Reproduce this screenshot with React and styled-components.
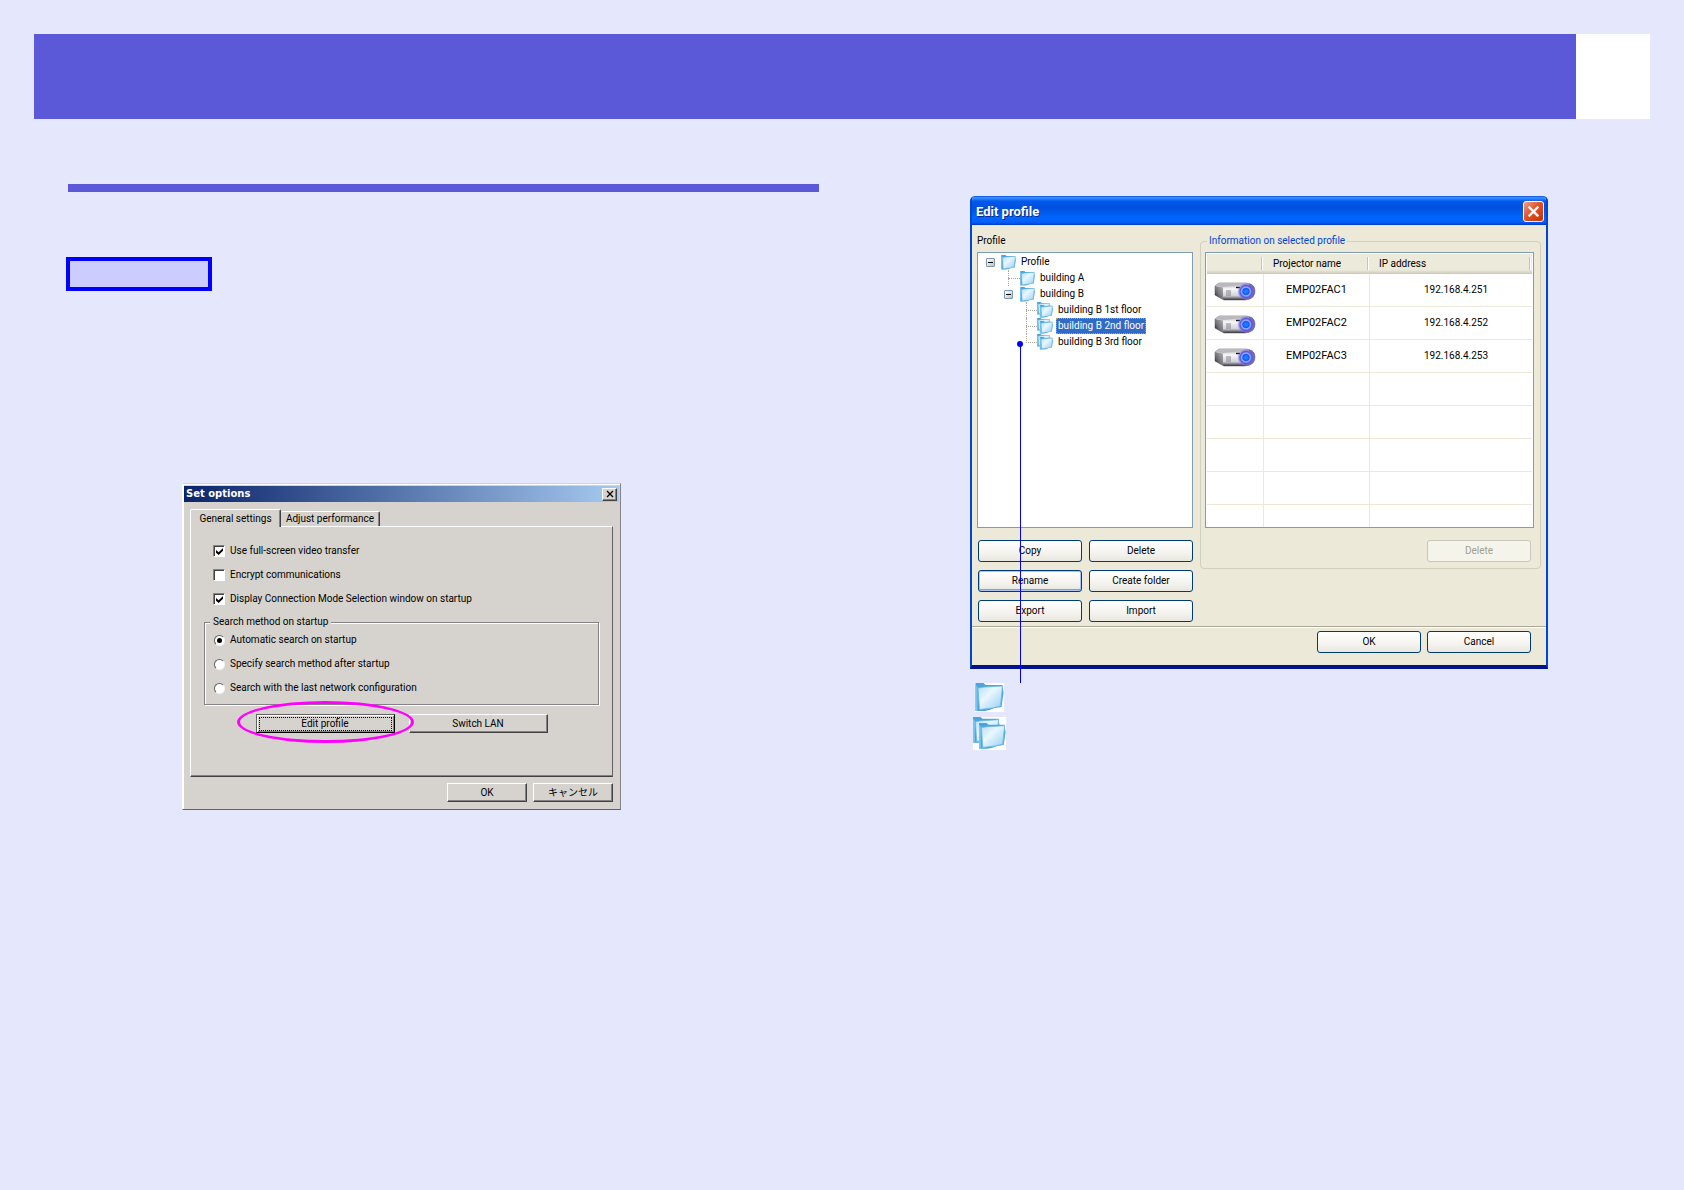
import React from "react";
import styled, { createGlobalStyle, css } from "styled-components";

const uiFont = 'Roboto, "Liberation Sans", "Noto Sans CJK JP", sans-serif';

const GlobalStyle = createGlobalStyle`
  *, *::before, *::after { box-sizing: border-box; }
  body { margin: 0; background: #e5e8fc; font-family: ${uiFont}; color: #000; }
  button, input { font: inherit; color: inherit; margin: 0; }
`;

/* ---------- page ---------- */

const Page = styled.div`
  min-height: 100vh;
  padding: 34px;
`;

const Banner = styled.header`
  display: flex;
  height: 85px;
  background: #5b59d8;
`;

const PageNumber = styled.div`
  width: 74px;
  margin-left: auto;
  background: #fff;
`;

const Columns = styled.main`
  display: grid;
  grid-template-columns: minmax(0, 1fr) minmax(0, 1fr);
  gap: 46px;
  padding: 65px 34px 0;
`;

const Column = styled.section`
  display: flex;
  flex-direction: column;
  align-items: flex-start;
`;

const SectionRule = styled.div`
  align-self: stretch;
  height: 8px;
  background: #5b59d8;
`;

const Tag = styled.div`
  width: 142px;
  height: 30px;
  margin-top: 67px;
  background: #ccf;
  border: 2px solid #00f;
  outline: 2px solid #00f;
`;

const Figure = styled.figure`
  position: relative;
  margin: ${(p) => p.$top}px 0 0 ${(p) => p.$left}px;
`;

const Highlight = styled.div`
  position: absolute;
  left: 55px;
  top: 218px;
  width: 177px;
  height: 42px;
  border: 3px solid #f0f;
  border-radius: 50%;
  pointer-events: none;
`;

const Callout = styled.div`
  position: absolute;
  left: 50px;
  top: 148px;
  width: 1px;
  height: 339px;
  background: #00f;
  pointer-events: none;

  &::before {
    content: "";
    position: absolute;
    left: -3px;
    top: -3px;
    width: 6px;
    height: 6px;
    border-radius: 50%;
    background: #00f;
  }
`;

const IconKey = styled.div`
  display: flex;
  flex-direction: column;
  align-items: center;
  gap: 5px;
  width: 33px;
  margin: 14px 0 0 3px;
`;

const IconTile = styled.div`
  display: flex;
  background: #fff;
`;

/* ---------- classic window ---------- */

const ClassicWindow = styled.div`
  width: 439px;
  padding: 2px 1px 1px;
  background: #d6d3ce;
  border: 1px solid;
  border-color: #d6d3ce #848284 #636163 #fff;
  box-shadow: inset 1px 1px 0 #fff;
  font-size: 10px;
  line-height: 12px;
`;

const ClassicTitle = styled.div`
  display: flex;
  align-items: center;
  justify-content: space-between;
  height: 16px;
  padding: 0 2px;
  background: linear-gradient(90deg, #0a246a, #a6caf0);
  color: #fff;
  font-family: "DejaVu Sans", sans-serif;
  font-size: 10px;
  font-weight: 700;
`;

const raised = css`
  background: #d6d3ce;
  border: 1px solid;
  border-color: #fff #424142 #424142 #fff;
  box-shadow: inset -1px -1px 0 #848284;
`;

const ClassicClose = styled.button`
  ${raised}
  display: flex;
  align-items: center;
  justify-content: center;
  width: 15px;
  height: 13px;
  padding: 0;
`;

const ClassicBody = styled.div`
  padding: 7px 6px 6px;
`;

const Tabs = styled.div`
  display: flex;
  align-items: flex-end;
`;

const Tab = styled.button`
  position: relative;
  height: ${(p) => (p.$active ? 18 : 15)}px;
  width: ${(p) => (p.$active ? 91 : 99)}px;
  margin-bottom: ${(p) => (p.$active ? -1 : 0)}px;
  z-index: ${(p) => (p.$active ? 1 : 0)};
  padding: 0;
  background: #d6d3ce;
  border: 1px solid #fff;
  border-width: 1px 1px 0 ${(p) => (p.$active ? 1 : 0)}px;
  border-right-color: #424142;
  border-radius: 2px 2px 0 0;
  box-shadow: inset -1px 0 0 #848284;
  white-space: nowrap;
`;

const TabPanel = styled.div`
  padding: 12px 13px 43px;
  border: 1px solid;
  border-color: #fff #636163 #424142 #fff;
  box-shadow: inset 0 -1px 0 #848284;
`;

const Choice = styled.label`
  display: flex;
  align-items: center;
  gap: 5px;
  height: 24px;
  padding-left: 9px;
`;

const CheckInput = styled.input.attrs({ type: "checkbox" })`
  appearance: none;
  width: 12px;
  height: 12px;
  background: #fff;
  border: 1px solid;
  border-color: #848284 #fff #fff #848284;
  box-shadow: inset 1px 1px 0 #424142;

  &:checked::before {
    content: "";
    display: block;
    width: 7px;
    height: 7px;
    margin: 2px;
    background: #000;
    clip-path: polygon(0 30%, 38% 62%, 100% 0, 100% 40%, 38% 100%, 0 68%);
  }
`;

const RadioInput = styled.input.attrs({ type: "radio" })`
  appearance: none;
  width: 11px;
  height: 11px;
  background: #fff;
  border: 1px solid;
  border-color: #636163 #f4f3ee #f4f3ee #636163;
  border-radius: 50%;

  &:checked::before {
    content: "";
    display: block;
    width: 5px;
    height: 5px;
    margin: 2px;
    border-radius: 50%;
    background: #000;
  }
`;

const ClassicGroup = styled.fieldset`
  min-width: 0;
  margin: 5px 0 0;
  padding: 0 0 4px;
  border: 1px solid #848284;
  box-shadow: 1px 1px 0 #fff, inset 1px 1px 0 #fff;

  legend {
    margin-left: 5px;
    padding: 0 3px;
    background: #d6d3ce;
  }
`;

const ClassicActions = styled.div`
  display: flex;
  gap: ${(p) => p.$gap}px;
  justify-content: ${(p) => p.$align};
  margin-top: ${(p) => p.$top}px;
`;

const ClassicButton = styled.button`
  ${raised}
  width: ${(p) => p.$width}px;
  height: 19px;
  padding: 0;
  ${(p) =>
    p.$focused &&
    css`
      border-color: #636163 #000 #000 #636163;
      box-shadow: inset 1px 1px 0 #fff, inset -1px -1px 0 #848284;
      span {
        display: block;
        margin: 0 2px;
        border: 1px dotted #000;
      }
    `}
`;

/* ---------- XP window ---------- */

const XpWindow = styled.div`
  width: 578px;
  background: #ece9d8;
  border: 2px solid #0046d5;
  border-top: 0;
  border-bottom: 4px solid #00138c;
  border-radius: 5px 5px 0 0;
  overflow: hidden;
  font-size: 10px;
  line-height: 14px;
`;

const XpTitle = styled.div`
  display: flex;
  align-items: center;
  justify-content: space-between;
  height: 29px;
  margin: 0 -2px;
  padding: 2px 4px 0 6px;
  background: linear-gradient(#0a50d8, #3a93ff 6%, #0058ee 18%, #0050dc 40%, #0066ff 75%, #0060fc 90%, #0038c0);
  color: #fff;
  font-size: 13px;
  font-weight: 700;
  text-shadow: 1px 1px 0 #0a2a80;
`;

const XpClose = styled.button`
  display: flex;
  align-items: center;
  justify-content: center;
  width: 21px;
  height: 21px;
  padding: 0;
  border: 1px solid #fff;
  border-radius: 3px;
  background: linear-gradient(135deg, #f0a08c, #e2512c 45%, #c83200);
`;

const XpBody = styled.div`
  display: grid;
  grid-template-columns: 216px minmax(0, 1fr);
  gap: 7px;
  padding: 9px 5px 4px;
`;

const Pane = styled.div`
  display: flex;
  flex-direction: column;
`;

const PaneTitle = styled.h2`
  margin: 0;
  padding-bottom: 4px;
  font-size: 10px;
  font-weight: 400;
  line-height: 14px;
`;

const Tree = styled.ul`
  height: 276px;
  margin: 0;
  padding: 1px 8px;
  list-style: none;
  background: #fff;
  border: 1px solid #7f9db9;
`;

const Branch = styled.ul`
  margin: 0;
  padding: 0 0 0 18px;
  list-style: none;
`;

const Node = styled.li`
  display: flex;
  align-items: center;
  height: 16px;
`;

const Elbow = styled.span`
  position: relative;
  width: ${(p) => p.$width}px;
  height: 16px;
  flex: none;

  &::before {
    content: "";
    position: absolute;
    left: 4px;
    right: 0;
    top: 8px;
    border-top: 1px dotted #aca899;
  }
  &::after {
    content: "";
    position: absolute;
    left: 4px;
    top: 0;
    height: ${(p) => (p.$last ? 9 : 16)}px;
    border-left: 1px dotted #aca899;
  }
`;

const Toggle = styled.button`
  position: relative;
  z-index: 1;
  flex: none;
  width: 9px;
  height: 9px;
  margin-right: ${(p) => p.$gap}px;
  padding: 0;
  border: 1px solid #7898b5;
  border-radius: 1px;
  background: linear-gradient(135deg, #fff, #c9c2b2);

  &::before {
    content: "";
    display: block;
    width: 5px;
    height: 1px;
    margin: 0 1px;
    background: #000;
  }
`;

const NodeIcon = styled.span`
  display: flex;
  flex: none;
  width: ${(p) => (p.$stacked ? 19 : 18)}px;
`;

const NodeLabel = styled.span`
  height: 16px;
  padding: 0 2px;
  line-height: 16px;
  white-space: nowrap;
  ${(p) =>
    p.$selected &&
    css`
      background: #316ac5;
      color: #fff;
      outline: 1px dotted #e09a2c;
      outline-offset: -1px;
    `}
`;

const ButtonGrid = styled.div`
  display: grid;
  grid-template-columns: 1fr 1fr;
  gap: 8px 7px;
  margin-top: 12px;
  padding-left: 1px;
`;

const XpButton = styled.button`
  height: 22px;
  min-width: 104px;
  padding: 0;
  border: 1px solid #003c74;
  border-radius: 3px;
  background: linear-gradient(#fff, #f4f3ee 60%, #e8e6df);
  ${(p) =>
    p.$active &&
    css`
      box-shadow: inset 0 0 0 1px #a9c3f5, inset 0 -2px 0 #7f9fe8;
    `}
  &:disabled {
    border-color: #c9c7ba;
    background: #f5f4ea;
    color: #a1a192;
  }
`;

const GroupBox = styled.fieldset`
  min-width: 0;
  margin: 0;
  padding: 4px 6px 6px 4px;
  border: 1px solid #d0d0bf;
  border-radius: 4px;
  align-self: start;

  legend {
    margin-left: 2px;
    padding: 0 2px;
    color: #0046d5;
  }
`;

const ListBox = styled.div`
  height: 276px;
  padding: 1px 1px 0;
  overflow: hidden;
  background: #fff;
  border: 1px solid #7f9db9;
`;

const ProjectorTable = styled.table`
  width: 100%;
  table-layout: fixed;
  border-collapse: separate;
  border-spacing: 0;

  th {
    position: relative;
    height: 20px;
    padding: 0 9px;
    background: linear-gradient(#ebeadb 80%, #cbc7b8);
    font-weight: 400;
    text-align: left;
  }
  th::after {
    content: "";
    position: absolute;
    right: 1px;
    top: 3px;
    height: 13px;
    border-left: 1px solid #c7c5b2;
    border-right: 1px solid #fff;
  }
  td {
    height: 33px;
    padding: 0;
    border: 0 solid #ece9d8;
    border-width: 0 1px 1px 0;
    font-size: 11px;
    text-align: center;
  }
  td:last-child {
    padding-left: 10px;
    border-right: 0;
    font-size: 10px;
  }
  td svg {
    display: block;
    margin: 2px auto 0;
  }
`;

const GroupActions = styled.div`
  display: flex;
  justify-content: flex-end;
  margin-top: 12px;
  padding-right: 3px;
`;

const XpFooter = styled.div`
  display: flex;
  justify-content: flex-end;
  gap: 6px;
  padding: 4px 15px 12px;
  border-top: 1px solid #aca899;
  box-shadow: inset 0 1px 0 #fff;
`;

/* ---------- drawings ---------- */

const Cross = ({ size, color, weight }) => (
  <svg width={size} height={size} viewBox="0 0 12 12" aria-hidden="true">
    <path d="M1.5 1.5L10.5 10.5M10.5 1.5L1.5 10.5" stroke={color} strokeWidth={weight} fill="none" />
  </svg>
);

const FolderShape = () => (
  <>
    <path d="M0 0H8L10 2H27L28 10L26 24L19 25L14 27L9 28H0Z" fill="#4ba5dc" />
    <path d="M0 2L2 4V28H0Z" fill="#7cc4ec" />
    <path d="M2.500 5L9 4L27 3L25 23L17 25L4 26.500Z" fill="url(#sheet)" stroke="#6cb8e6" strokeWidth="0.8" />
  </>
);

const IconDefs = () => (
  <svg width="0" height="0" style={{ position: "absolute" }} aria-hidden="true">
    <defs>
      <linearGradient id="sheet" x1="0" y1="0" x2="1" y2="1">
        <stop offset="0" stopColor="#b4def8" />
        <stop offset="0.4" stopColor="#eaf7ff" />
        <stop offset="1" stopColor="#93cdf4" />
      </linearGradient>
      <linearGradient id="shell" x1="0" y1="0" x2="0" y2="1">
        <stop offset="0" stopColor="#a8a8ae" />
        <stop offset="0.35" stopColor="#f8f8fa" />
        <stop offset="0.75" stopColor="#d0d0d8" />
        <stop offset="1" stopColor="#30303c" />
      </linearGradient>
      <linearGradient id="flank" x1="1" y1="0" x2="0" y2="1">
        <stop offset="0" stopColor="#b4b4b8" />
        <stop offset="0.6" stopColor="#6e6e74" />
        <stop offset="1" stopColor="#0c0c10" />
      </linearGradient>
      <radialGradient id="lens">
        <stop offset="0" stopColor="#2a90ff" />
        <stop offset="0.38" stopColor="#0a5cff" />
        <stop offset="0.5" stopColor="#a4acff" />
        <stop offset="0.7" stopColor="#5a52dc" />
        <stop offset="1" stopColor="#8a86e8" stopOpacity="0.2" />
      </radialGradient>
    </defs>
  </svg>
);

const Folder = ({ size }) => (
  <svg width={size} height={size} viewBox="0 0 28 29" aria-hidden="true">
    <FolderShape />
  </svg>
);

const Folders = ({ size }) => (
  <svg width={size} height={size} viewBox="0 0 33 33" aria-hidden="true">
    <g transform="scale(0.95 0.92)">
      <FolderShape />
    </g>
    <g transform="translate(6 6) scale(0.95 0.92)">
      <FolderShape />
    </g>
  </svg>
);

const Projector = () => (
  <svg width="42" height="19" viewBox="0 0 42 19" aria-hidden="true">
    <path d="M5 1H32Q41 2 41 9Q41 17 31 18H10L1 13V4Z" fill="url(#shell)" stroke="#55555c" strokeWidth="0.5" />
    <path d="M1 4L9 5.500V17.500L1 13Z" fill="url(#flank)" />
    <path d="M5 1H32L34 2.500L9 5L1 4Z" fill="#b9b9be" />
    <path d="M12 9H17M12 11H17M12 13H17" stroke="#77777d" strokeWidth="0.9" />
    <path d="M22 5.500H26" stroke="#111" strokeWidth="1.400" />
    <path d="M35 1.500Q41 3 41 9Q41 16 34 17.500Z" fill="#6660a8" />
    <circle cx="32" cy="9.500" r="8.500" fill="url(#lens)" />
  </svg>
);

/* ---------- data ---------- */

const options = [
  ["Use full-screen video transfer", true],
  ["Encrypt communications", false],
  ["Display Connection Mode Selection window on startup", true],
];

const searchMethods = [
  "Automatic search on startup",
  "Specify search method after startup",
  "Search with the last network configuration",
];

const floors = ["building B 1st floor", "building B 2nd floor", "building B 3rd floor"];

const projectors = [
  ["EMP02FAC1", "192.168.4.251"],
  ["EMP02FAC2", "192.168.4.252"],
  ["EMP02FAC3", "192.168.4.253"],
];

const profileActions = ["Copy", "Delete", "Rename", "Create folder", "Export", "Import"];

/* ---------- windows ---------- */

const SetOptions = () => (
  <ClassicWindow>
    <ClassicTitle>
      Set options
      <ClassicClose aria-label="Close">
        <Cross size={8} color="#000" weight={2} />
      </ClassicClose>
    </ClassicTitle>
    <ClassicBody>
      <Tabs role="tablist">
        <Tab role="tab" aria-selected="true" $active>General settings</Tab>
        <Tab role="tab" aria-selected="false">Adjust performance</Tab>
      </Tabs>
      <TabPanel role="tabpanel">
        {options.map(([text, on]) => (
          <Choice key={text}>
            <CheckInput defaultChecked={on} />
            {text}
          </Choice>
        ))}
        <ClassicGroup>
          <legend>Search method on startup</legend>
          {searchMethods.map((text, i) => (
            <Choice key={text}>
              <RadioInput name="search-method" defaultChecked={i === 0} />
              {text}
            </Choice>
          ))}
        </ClassicGroup>
        <ClassicActions $gap={14} $align="center" $top={9}>
          <ClassicButton $width={139} $focused><span>Edit profile</span></ClassicButton>
          <ClassicButton $width={139}>Switch LAN</ClassicButton>
        </ClassicActions>
      </TabPanel>
      <ClassicActions $gap={6} $align="flex-end" $top={6}>
        <ClassicButton $width={80}>OK</ClassicButton>
        <ClassicButton $width={80} lang="ja">キャンセル</ClassicButton>
      </ClassicActions>
    </ClassicBody>
  </ClassicWindow>
);

const ProfileTree = () => (
  <Tree>
    <li>
      <Node as="div">
        <Toggle aria-label="Collapse Profile" $gap={6} />
        <NodeIcon><Folder size={15} /></NodeIcon>
        <NodeLabel>Profile</NodeLabel>
      </Node>
      <Branch>
        <Node>
          <Elbow $width={16} />
          <NodeIcon><Folder size={15} /></NodeIcon>
          <NodeLabel>building A</NodeLabel>
        </Node>
        <li>
          <Node as="div">
            <Toggle aria-label="Collapse building B" $gap={7} />
            <NodeIcon><Folder size={15} /></NodeIcon>
            <NodeLabel>building B</NodeLabel>
          </Node>
          <Branch>
            {floors.map((name, i) => (
              <Node key={name}>
                <Elbow $width={15} $last={i === floors.length - 1} />
                <NodeIcon $stacked><Folders size={16} /></NodeIcon>
                <NodeLabel $selected={i === 1}>{name}</NodeLabel>
              </Node>
            ))}
          </Branch>
        </li>
      </Branch>
    </li>
  </Tree>
);

const EditProfile = () => (
  <XpWindow>
    <XpTitle>
      Edit profile
      <XpClose aria-label="Close">
        <Cross size={13} color="#fff" weight={2.2} />
      </XpClose>
    </XpTitle>
    <XpBody>
      <Pane>
        <PaneTitle>Profile</PaneTitle>
        <ProfileTree />
        <ButtonGrid>
          {profileActions.map((name) => (
            <XpButton key={name} $active={name === "Rename"}>{name}</XpButton>
          ))}
        </ButtonGrid>
      </Pane>
      <GroupBox>
        <legend>Information on selected profile</legend>
        <ListBox>
          <ProjectorTable>
            <colgroup>
              <col width="57" />
              <col width="106" />
              <col />
            </colgroup>
            <thead>
              <tr>
                <th aria-label="Type" />
                <th>Projector name</th>
                <th>IP address</th>
              </tr>
            </thead>
            <tbody>
              {projectors.map(([name, ip]) => (
                <tr key={name}>
                  <td><Projector /></td>
                  <td>{name}</td>
                  <td>{ip}</td>
                </tr>
              ))}
              {[4, 5, 6, 7, 8].map((row) => (
                <tr key={row}>
                  <td />
                  <td />
                  <td />
                </tr>
              ))}
            </tbody>
          </ProjectorTable>
        </ListBox>
        <GroupActions>
          <XpButton disabled>Delete</XpButton>
        </GroupActions>
      </GroupBox>
    </XpBody>
    <XpFooter>
      <XpButton>OK</XpButton>
      <XpButton>Cancel</XpButton>
    </XpFooter>
  </XpWindow>
);

export default function App() {
  return (
    <Page>
      <GlobalStyle />
      <IconDefs />
      <Banner>
        <PageNumber />
      </Banner>
      <Columns>
        <Column>
          <SectionRule />
          <Tag />
          <Figure $top={194} $left={114}>
            <SetOptions />
            <Highlight />
          </Figure>
        </Column>
        <Column>
          <Figure $top={12} $left={105}>
            <EditProfile />
            <Callout />
            <IconKey>
              <IconTile><Folder size={29} /></IconTile>
              <IconTile><Folders size={33} /></IconTile>
            </IconKey>
          </Figure>
        </Column>
      </Columns>
    </Page>
  );
}
